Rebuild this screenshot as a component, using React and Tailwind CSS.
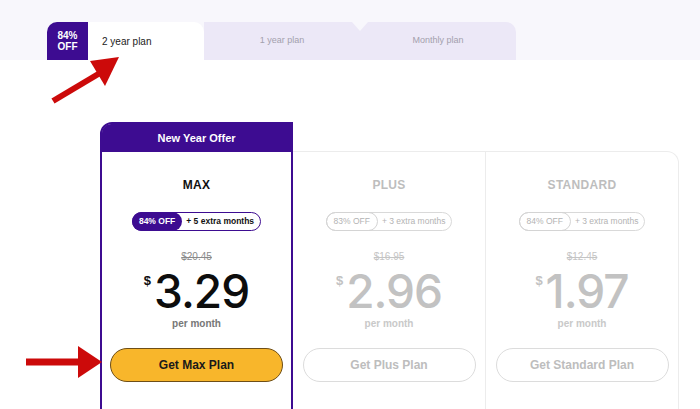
import React from 'react'

function Pill({ off, extra, active }) {
  return (
    <div
      className={
        'flex items-center h-[19px] rounded-full border text-[8.5px] ' +
        (active ? 'border-[#3d0c91] text-[#111]' : 'border-[#d9d9d9] text-[#b3b3b3]')
      }
    >
      <span
        className={
          'h-[19px] -my-px -ml-px flex items-center px-[7px] rounded-full ' +
          (active ? 'bg-[#3d0c91] text-white font-semibold' : 'border border-[#d4d4d4]')
        }
      >
        {off}
      </span>
      <span className={'pl-[4px] pr-[6px] ' + (active ? 'font-semibold' : '')}>{extra}</span>
    </div>
  )
}

function PlanBody({ name, off, extra, old, price, cta, active }) {
  return (
    <div className="flex flex-col items-center pt-[24px] pb-[60px]">
      <div className={'text-[12px] font-bold tracking-wide ' + (active ? 'text-[#111]' : 'text-[#bdbdbd]')}>
        {name}
      </div>
      <div className="mt-[18px]">
        <Pill off={off} extra={extra} active={active} />
      </div>
      <div className={'mt-[18px] text-[10px] line-through ' + (active ? 'text-[#8a8a8a]' : 'text-[#c4c4c4]')}>
        {old}
      </div>
      <div className={'mt-[4px] flex items-start ' + (active ? 'text-[#0d0d0d]' : 'text-[#c2c2c2]')}>
        <span className="text-[13px] font-semibold mt-[3px] mr-[3px]">$</span>
        <span className="text-[46px] leading-[46px] font-medium tracking-[-1px]" style={{ fontFamily: 'Inter, sans-serif' }}>
          {price}
        </span>
      </div>
      <div className={'mt-[2px] text-[10px] font-semibold ' + (active ? 'text-[#777]' : 'text-[#c9c9c9]')}>per month</div>
      <button
        className={
          'mt-[17px] w-[173px] h-[34px] rounded-full text-[12px] font-bold ' +
          (active
            ? 'bg-[#f8b62b] border border-[#6e4e17] text-[#1a1a1a]'
            : 'bg-white border border-[#dcdcdc] text-[#bdbdbd]')
        }
      >
        {cta}
      </button>
    </div>
  )
}

export default function App() {
  return (
    <div
      className="relative w-[700px] h-[409px] overflow-hidden bg-white"
      style={{ fontFamily: '"Liberation Sans", Arial, sans-serif' }}
    >
      {/* plan tabs */}
      <div className="h-[60px] bg-[#f8f7fc] pt-[22px] pl-[47px] flex">
        <div className="w-[41px] h-[38px] bg-[#3d0c91] rounded-tl-[10px] flex flex-col items-center justify-center text-white text-[10px] font-bold leading-[11px]">
          <span>84%</span>
          <span>OFF</span>
        </div>
        <div className="w-[116px] h-[38px] bg-white rounded-tr-[10px] flex items-center pl-[14px] text-[10px] text-[#222]">
          2 year plan
        </div>
        <div className="relative flex h-[38px] w-[312px] bg-[#ece8f7] rounded-tr-[10px]">
          <div className="flex-1 flex items-center justify-center text-[9px] text-[#a3a0ad]">1 year plan</div>
          <div className="flex-1 flex items-center justify-center text-[9px] text-[#a3a0ad]">Monthly plan</div>
          <div className="absolute left-[148px] top-0 w-0 h-0 border-l-[8px] border-r-[8px] border-t-[9px] border-l-transparent border-r-transparent border-t-[#f8f7fc]" />
        </div>
      </div>

      {/* cards */}
      <div className="mt-[62px] pl-[100px] flex items-start">
        <div className="w-[193px] border-2 border-[#3d0c91] rounded-tl-[12px] bg-white">
          <div className="h-[28px] bg-[#3d0c91] rounded-tl-[9px] flex items-center justify-center text-white text-[11px] font-bold">
            New Year Offer
          </div>
          <PlanBody name="MAX" off="84% OFF" extra="+ 5 extra months" old="$20.45" price="3.29" cta="Get Max Plan" active />
        </div>
        <div className="w-[193px] mt-[29px] border border-l-0 border-[#ececec]">
          <PlanBody name="PLUS" off="83% OFF" extra="+ 3 extra months" old="$16.95" price="2.96" cta="Get Plus Plan" />
        </div>
        <div className="w-[193px] mt-[29px] border border-l-0 border-[#ececec] rounded-tr-[12px]">
          <PlanBody name="STANDARD" off="84% OFF" extra="+ 3 extra months" old="$12.45" price="1.97" cta="Get Standard Plan" />
        </div>
      </div>

      {/* red annotation arrows */}
      <svg className="absolute inset-0 pointer-events-none" width="700" height="409" viewBox="0 0 700 409">
        <line x1="53" y1="101" x2="100" y2="73" stroke="#cc0a0a" strokeWidth="6" />
        <polygon points="119,57 90,61 105,86" fill="#cc0a0a" />
        <line x1="26" y1="362" x2="82" y2="362" stroke="#cc0a0a" strokeWidth="7" />
        <polygon points="102,362 78,346 78,378" fill="#cc0a0a" />
      </svg>
    </div>
  )
}
